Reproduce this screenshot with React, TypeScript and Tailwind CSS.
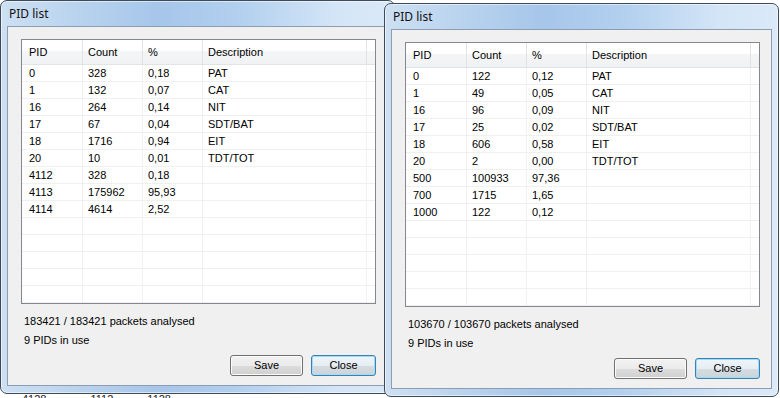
import React from "react";

type Row = [string, string, string, string];

const leftRows: Row[] = [
  ["0", "328", "0,18", "PAT"],
  ["1", "132", "0,07", "CAT"],
  ["16", "264", "0,14", "NIT"],
  ["17", "67", "0,04", "SDT/BAT"],
  ["18", "1716", "0,94", "EIT"],
  ["20", "10", "0,01", "TDT/TOT"],
  ["4112", "328", "0,18", ""],
  ["4113", "175962", "95,93", ""],
  ["4114", "4614", "2,52", ""],
];

const rightRows: Row[] = [
  ["0", "122", "0,12", "PAT"],
  ["1", "49", "0,05", "CAT"],
  ["16", "96", "0,09", "NIT"],
  ["17", "25", "0,02", "SDT/BAT"],
  ["18", "606", "0,58", "EIT"],
  ["20", "2", "0,00", "TDT/TOT"],
  ["500", "100933", "97,36", ""],
  ["700", "1715", "1,65", ""],
  ["1000", "122", "0,12", ""],
];

function Table({ rows }: { rows: Row[] }) {
  const all: Row[] = [...rows];
  while (all.length < 14) all.push(["", "", "", ""]);
  return (
    <div className="w-[355px] h-[265px] border border-[#828790] bg-white flex flex-col overflow-hidden">
      <div className="h-[25px] flex border-b border-[#e2e3e5] bg-[linear-gradient(180deg,#ffffff_0%,#ffffff_45%,#f4f5f7_46%,#f1f2f4_100%)]">
        <div className="w-[61px] pl-[7px] border-r border-[#e2e3e5] flex items-center">PID</div>
        <div className="w-[60px] pl-[5px] border-r border-[#e2e3e5] flex items-center">Count</div>
        <div className="w-[60px] pl-[5px] border-r border-[#e2e3e5] flex items-center">%</div>
        <div className="w-[164px] pl-[5px] border-r border-[#e2e3e5] flex items-center">Description</div>
        <div className="flex-1" />
      </div>
      {all.map((r, i) => (
        <div key={i} className="h-[17px] flex border-b border-[#f0f0f0] shrink-0">
          <div className="w-[61px] pl-[7px] border-r border-[#f0f0f0] flex items-center">{r[0]}</div>
          <div className="w-[60px] pl-[5px] border-r border-[#f0f0f0] flex items-center">{r[1]}</div>
          <div className="w-[60px] pl-[5px] border-r border-[#f0f0f0] flex items-center">{r[2]}</div>
          <div className="w-[164px] pl-[5px] border-r border-[#f0f0f0] flex items-center">{r[3]}</div>
          <div className="flex-1" />
        </div>
      ))}
    </div>
  );
}

function Win({
  rows,
  line1,
  pos,
}: {
  rows: Row[];
  line1: string;
  pos: string;
}) {
  return (
    <div
      className={`absolute ${pos} w-[395px] h-[394px] rounded-[7px] border border-[#3e4a58] bg-[linear-gradient(90deg,#cde0f3_0%,#b9d3ee_20%,#a6c6ea_40%,#b2cfee_60%,#d3e5f7_85%,#dbe9f8_100%)] shadow-[inset_0_0_0_1px_rgba(255,255,255,0.55)] flex flex-col`}
    >
      <div className="h-[25px] shrink-0 flex items-center pl-[8px] pt-[1px] font-['Noto_Sans',sans-serif] text-[12px] text-[#111]">
        PID list
      </div>
      <div className="mx-[6px] mb-[7px] flex-1 border border-[#8d9cb0] bg-[#f0f0f0] flex flex-col pl-[13px] pr-[11px] pt-[12px] font-['Liberation_Sans',Arial,sans-serif] text-[11px] text-black">
        <Table rows={rows} />
        <div className="mt-[11px] pl-[3px] leading-[13px]">{line1}</div>
        <div className="mt-[6px] pl-[3px] leading-[13px]">9 PIDs in use</div>
        <div className="mt-[8px] flex justify-end gap-[8px]">
          <div className="w-[73px] h-[21px] rounded-[3px] border border-[#707070] bg-[linear-gradient(180deg,#f2f2f2_0%,#ebebeb_50%,#dddddd_51%,#cfcfcf_100%)] shadow-[inset_0_0_0_1px_#fbfbfb] flex items-center justify-center">
            Save
          </div>
          <div className="w-[65px] h-[21px] rounded-[3px] border border-[#3c7fb1] bg-[linear-gradient(180deg,#eef6fb_0%,#e6eef3_50%,#d6dde2_51%,#cdd4d9_100%)] shadow-[inset_0_0_0_1px_#9edcf8] flex items-center justify-center">
            Close
          </div>
        </div>
      </div>
    </div>
  );
}

export default function App() {
  return (
    <div className="relative w-[780px] h-[398px] overflow-hidden bg-white">
      <div className="absolute left-[0px] top-[392px] w-[400px] h-[14px] font-['Liberation_Sans',Arial,sans-serif] text-[11px] text-[#222] leading-[14px] flex">
        <span className="ml-[22px]">4128</span>
        <span className="ml-[44px]">1112</span>
        <span className="ml-[34px]">1128</span>
      </div>
      <Win rows={leftRows} line1="183421 / 183421 packets analysed" pos="left-[0px] top-[0px]" />
      <Win rows={rightRows} line1="103670 / 103670 packets analysed" pos="left-[384px] top-[3px]" />
    </div>
  );
}
